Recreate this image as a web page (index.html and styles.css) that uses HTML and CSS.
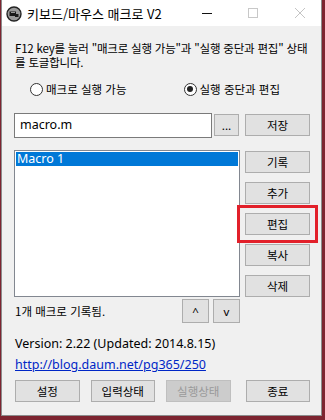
FILE: index.html
```html
<!DOCTYPE html>
<html lang="ko">
<head>
  <meta charset="UTF-8">
  <title>키보드/마우스 매크로 V2</title>
  <link rel="stylesheet" href="styles.css">
</head>
<body>
  <div class="window">
    <div class="titlebar">
      <svg class="app-icon" width="16" height="16" viewBox="0 0 16 16">
        <circle cx="8" cy="8" r="7" fill="#9a9a9a" stroke="#222" stroke-width="1.4"/>
        <path d="M3.5 5.5 H10 V8 H12.5 V11 H9 V10 H3.5 Z" fill="#1a1a1a"/>
        <path d="M5 6.5 H9" stroke="#bbb" stroke-width="0.8"/>
      </svg>
      <span class="title">키보드/마우스 매크로 V2</span>
      <span class="ctl ctl-min"></span>
      <span class="ctl ctl-max"></span>
      <svg class="ctl-close" width="12" height="12" viewBox="0 0 12 12">
        <path d="M1 1 L11 11 M11 1 L1 11" stroke="#c4c4c4" stroke-width="1"/>
      </svg>
    </div>

    <div class="content">
      <p class="desc">F12 key를 눌러 "매크로 실행 가능"과 "실행 중단과 편집" 상태<br>를 토글합니다.</p>

      <div class="radios">
        <label class="radio"><span class="dot"></span>매크로 실행 가능</label>
        <label class="radio on"><span class="dot"></span>실행 중단과 편집</label>
      </div>

      <div class="file-row">
        <div class="field">macro.m</div>
        <button class="btn btn-dots">...</button>
        <button class="btn btn-side">저장</button>
      </div>

      <div class="list-row">
        <div class="listbox">
          <div class="item selected">Macro 1</div>
        </div>
        <div class="side-buttons">
          <button class="btn btn-side">기록</button>
          <button class="btn btn-side">추가</button>
          <div class="marked">
            <button class="btn btn-side">편집</button>
            <span class="red-box"></span>
          </div>
          <button class="btn btn-side">복사</button>
          <button class="btn btn-side">삭제</button>
        </div>
      </div>

      <div class="status-row">
        <span class="count">1개 매크로 기록됨.</span>
        <button class="btn btn-arrow">^</button>
        <button class="btn btn-arrow">v</button>
      </div>

      <p class="version">Version: 2.22 (Updated: 2014.8.15)</p>
      <a class="link" href="#">http://blog.daum.net/pg365/250</a>

      <div class="bottom-row">
        <button class="btn btn-bottom">설정</button>
        <button class="btn btn-bottom">입력상태</button>
        <button class="btn btn-bottom" disabled>실행상태</button>
        <button class="btn btn-bottom btn-last">종료</button>
      </div>
    </div>
  </div>
</body>
</html>
```

FILE: styles.css
```css
body {
  margin: 0;
  padding: 0;
  background-color: #7d2430;
  font-family: 'Noto Sans', 'Noto Sans CJK KR', sans-serif;
  font-size: 12px;
  color: #000;
  height: 420px;
  overflow: hidden;
}
.window {
  margin-left: 1px;
  width: 319px;
  height: 415px;
  background-color: #f0f0f0;
  border: 1px solid #8c8c8c;
  border-top: none;
}
.titlebar {
  height: 26px;
  background-color: #fff;
  display: flex;
  align-items: center;
}
.app-icon {
  margin-left: 4px;
  margin-top: 1px;
  flex-shrink: 0;
}
.title {
  flex: 1;
  margin-left: 5px;
  font-family: 'Noto Sans CJK KR', sans-serif;
  font-size: 13px;
  white-space: nowrap;
}
.ctl-min {
  width: 10px;
  height: 1px;
  background-color: #111;
  flex-shrink: 0;
}
.ctl-max {
  margin-left: 36px;
  width: 8px;
  height: 8px;
  border: 1px solid #c8c8c8;
  flex-shrink: 0;
}
.ctl-close {
  margin-left: 36px;
  margin-right: 15px;
  flex-shrink: 0;
}
.content {
  padding: 0 11px 0 12px;
}
.desc {
  margin: 15px 0 0 1px;
  line-height: 14px;
  font-family: 'Noto Sans CJK KR', sans-serif;
  font-size: 11.5px;
  letter-spacing: -0.2px;
  white-space: nowrap;
}
.radios {
  display: flex;
  margin-top: 13px;
  height: 14px;
  align-items: center;
}
.radio {
  display: flex;
  align-items: center;
  gap: 3px;
  font-family: 'Noto Sans CJK KR', sans-serif;
  font-size: 11.5px;
  margin-left: 16px;
}
.radio.on {
  margin-left: 57px;
}
.dot {
  width: 11px;
  height: 11px;
  border: 1px solid #333;
  border-radius: 50%;
  background-color: #fff;
  position: relative;
}
.radio.on .dot::after {
  content: '';
  position: absolute;
  left: 2.5px;
  top: 2.5px;
  width: 6px;
  height: 6px;
  border-radius: 50%;
  background-color: #222;
}
.file-row {
  display: flex;
  align-items: center;
  margin-top: 16px;
  height: 26px;
}
.field {
  width: 191px;
  height: 23px;
  border: 1px solid #7a7a7a;
  background-color: #fff;
  padding-left: 5px;
  line-height: 22px;
  font-size: 12.5px;
}
.btn {
  font-family: 'Noto Sans CJK KR', sans-serif;
  font-size: 11.5px;
  background-color: #e1e1e1;
  border: 1px solid #adadad;
  color: #000;
  padding: 0;
  height: 22px;
}
.btn:disabled {
  background-color: #cccccc;
  border-color: #bfbfbf;
  color: #9a9a9a;
}
.btn-dots {
  width: 25px;
  margin-left: 2px;
  line-height: 18px;
}
.file-row .btn-side {
  margin-left: 6px;
}
.btn-side {
  width: 65px;
}
.list-row {
  display: flex;
  margin-top: 12px;
  height: 147px;
}
.listbox {
  width: 224px;
  height: 144px;
  border: 1px solid #828790;
  background-color: #fff;
  padding: 1px 1px 0 1px;
}
.item {
  height: 14px;
  line-height: 14px;
  padding-left: 1px;
  font-size: 12.5px;
}
.item.selected {
  background-color: #0078d7;
  color: #fff;
}
.side-buttons {
  margin-left: 5px;
  display: flex;
  flex-direction: column;
  gap: 9px;
  padding-top: 1px;
}
.marked {
  position: relative;
  height: 22px;
}
.red-box {
  position: absolute;
  left: -8px;
  top: -8px;
  width: 75px;
  height: 32px;
  border: 3px solid #e2202a;
}
.status-row {
  display: flex;
  align-items: center;
  height: 24px;
  margin-top: 2px;
}
.count {
  font-family: 'Noto Sans CJK KR', sans-serif;
  font-size: 11.5px;
  margin-left: 1px;
  width: 167px;
}
.btn-arrow {
  width: 27px;
  height: 24px;
  font-family: 'Noto Sans', sans-serif;
  margin-right: 4px;
}
.version {
  margin: 13px 0 0 1px;
  line-height: 15px;
  font-size: 12.5px;
}
.link {
  display: inline-block;
  margin: 6px 0 0 1px;
  line-height: 15px;
  font-size: 12.5px;
  color: #0026c6;
}
.bottom-row {
  display: flex;
  margin-top: 7px;
  gap: 11px;
}
.btn-bottom {
  width: 65px;
}
.bottom-row .btn-bottom:first-child {
  margin-left: 1px;
}
.btn-last {
  margin-left: 4px;
}
```
